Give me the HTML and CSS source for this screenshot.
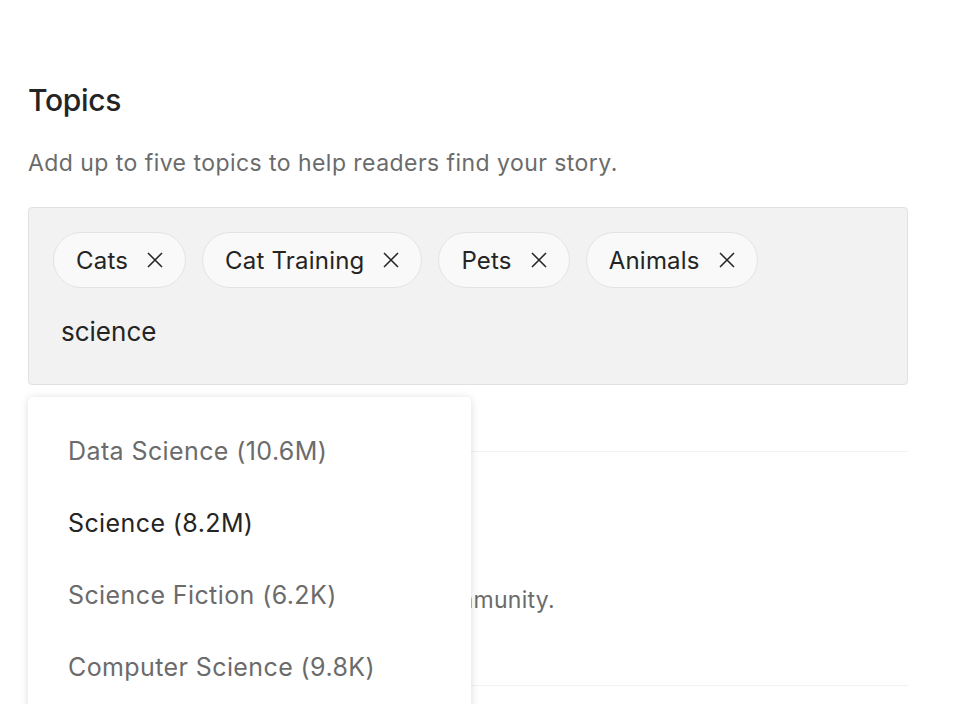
FILE: index.html
```html
<!DOCTYPE html>
<html>
<head>
<meta charset="utf-8">
<link rel="stylesheet" href="styles.css">
</head>
<body>
<div class="page">
  <section class="topics">
    <h2 class="title">Topics</h2>
    <p class="subtitle">Add up to five topics to help readers find your story.</p>
    <div class="field">
      <div class="chips">
        <span class="chip">Cats<svg class="x" viewBox="0 0 16 16"><path d="M1 1l14 14M15 1L1 15"/></svg></span>
        <span class="chip">Cat Training<svg class="x" viewBox="0 0 16 16"><path d="M1 1l14 14M15 1L1 15"/></svg></span>
        <span class="chip">Pets<svg class="x" viewBox="0 0 16 16"><path d="M1 1l14 14M15 1L1 15"/></svg></span>
        <span class="chip">Animals<svg class="x" viewBox="0 0 16 16"><path d="M1 1l14 14M15 1L1 15"/></svg></span>
        <div class="typed">science</div>
      </div>
    </div>
    <ul class="dropdown">
      <li class="opt">Data Science (10.6M)</li>
      <li class="opt active">Science (8.2M)</li>
      <li class="opt">Science Fiction (6.2K)</li>
      <li class="opt">Computer Science (9.8K)</li>
    </ul>
  </section>
  <section class="more">
    <p class="more-text">Share your story with the community.</p>
  </section>
  <div class="rule"></div>
</div>
</body>
</html>
```
FILE: styles.css
```css
* { box-sizing: border-box; }
html, body { margin: 0; padding: 0; background: #fff; }
body { height: 704px; overflow: hidden; font-family: Inter, "Noto Sans", "Liberation Sans", sans-serif; color: #242424; }
.page { width: 880px; margin-left: 28px; padding-top: 80px; }
.topics { position: relative; z-index: 2; }
.title { margin: 0; font-size: 30px; font-weight: 500; line-height: 40px; letter-spacing: -0.3px; }
.subtitle { margin: 28px 0 0; font-size: 23px; line-height: 30px; color: #6b6b6b; letter-spacing: 0.45px; }
.field { margin-top: 29px; background: #f2f2f2; border: 1px solid #e0e0e0; border-radius: 4px; padding: 24px 24px 24px; }
.chips { display: flex; flex-wrap: wrap; gap: 16px; }
.chip { display: inline-flex; align-items: center; height: 56px; padding: 0 22px; border: 1.5px solid #e3e3e3; border-radius: 28px; background: #f9f9f9; font-size: 24px; color: #242424; letter-spacing: 0.2px; }
.x { width: 16px; height: 16px; margin-left: 19px; fill: none; stroke: #242424; stroke-width: 1.5; }
.typed { width: 100%; height: 56px; line-height: 56px; padding-left: 8px; font-size: 26px; color: #242424; }
.dropdown { position: absolute; left: 0; top: 317px; width: 443px; height: 340px; margin: 0; padding: 18px 0 0; list-style: none; background: #fff; border-radius: 5px; box-shadow: 0 1px 8px rgba(0,0,0,0.14); z-index: 2; }
.opt { height: 72px; line-height: 72px; padding-left: 40px; font-size: 25px; color: #6b6b6b; letter-spacing: 0.4px; }
.opt.active { color: #242424; }
.more { margin-top: 66px; border-top: 1.5px solid #f2f2f2; padding-top: 133px; height: 234px; }
.more-text { margin: 0; width: 527px; text-align: right; font-size: 23px; line-height: 30px; color: #6b6b6b; letter-spacing: 0.3px; }
.rule { border-top: 1.5px solid #f2f2f2; }
```
